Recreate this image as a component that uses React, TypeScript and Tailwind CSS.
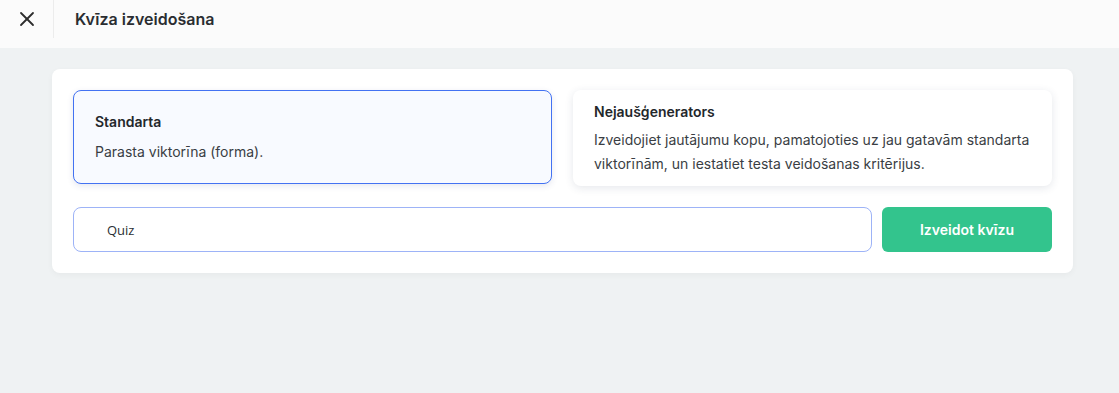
import { X } from 'lucide-react'

export default function App() {
  return (
    <div className="min-h-[393px] w-full bg-[#eff2f3] font-['Inter',sans-serif] text-[#23272b]">
      {/* Augšējā josla */}
      <header className="h-12 bg-[#fbfbfb] flex items-start">
        <button className="w-[54px] h-[38px] flex items-center justify-center border-r border-[#ececec] text-[#2d2d2d]">
          <X className="w-[24px] h-[24px]" strokeWidth={1.8} />
        </button>
        <h1 className="pl-[21px] h-[38px] flex items-center text-[16px] font-semibold text-[#2a2d31]">Kvīza izveidošana</h1>
      </header>

      <main className="pl-[52px] pr-[46px] pt-[21px]">
        <div className="bg-white rounded-[8px] p-[21px] shadow-[0_2px_6px_rgba(0,0,0,0.04)] flex flex-col gap-[21px]">
          <div className="grid grid-cols-2 gap-[21px] items-start">
            <div className="h-[94px] rounded-[8px] border border-[#4372f2] bg-[#f8faff] shadow-[0_2px_6px_rgba(40,60,120,0.12)] px-[21px] pt-[21px]">
              <div className="text-[14px] font-semibold leading-[20px]">Standarta</div>
              <div className="mt-[10px] text-[14px] leading-[20px] text-[#3a3e44]">Parasta viktorīna (forma).</div>
            </div>
            <div className="h-[96px] rounded-[8px] bg-white shadow-[0_2px_8px_rgba(40,60,90,0.12)] px-[21px] pt-[12px]">
              <div className="text-[14px] font-semibold leading-[20px]">Nejaušģenerators</div>
              <div className="mt-[6px] text-[14px] leading-[24px] text-[#3a3e44]">
                Izveidojiet jautājumu kopu, pamatojoties uz jau gatavām standarta viktorīnām, un iestatiet testa veidošanas kritērijus.
              </div>
            </div>
          </div>

          <div className="flex gap-[10px]">
            <input
              defaultValue="Quiz"
              className="flex-1 h-[45px] rounded-[8px] border border-[#9db3f7] bg-white pl-[33px] text-[13px] font-['Open_Sans',sans-serif] text-[#2b2f33] outline-none"
            />
            <button className="w-[170px] h-[45px] rounded-[6px] bg-[#33c48d] text-white text-[14px] font-semibold">
              Izveidot kvīzu
            </button>
          </div>
        </div>
      </main>
    </div>
  )
}
